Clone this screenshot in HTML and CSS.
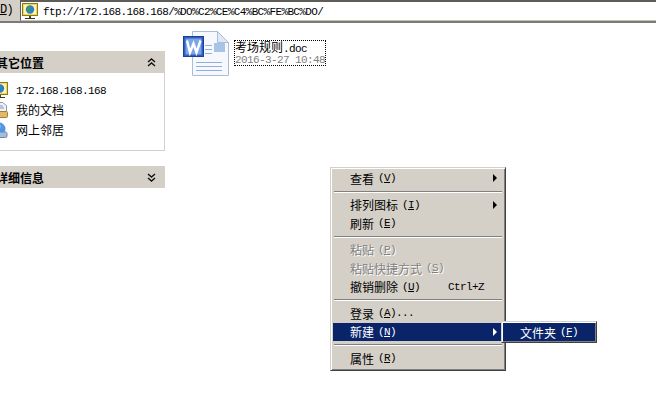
FILE: index.html
```html
<!DOCTYPE html>
<html lang="zh">
<head>
<meta charset="utf-8">
<title>FTP</title>
<link rel="stylesheet" href="styles.css">
</head>
<body>
<div class="window">
  <div class="address-bar">
    <div class="address-label"><u>D</u>)</div>
    <div class="address-input">
      <svg class="icon-16" viewBox="0 0 16 16"><rect x="0.500" y="0.500" width="15" height="12" fill="#f0d860" stroke="#8a7a1c"/><rect x="2" y="2" width="12" height="9" fill="#fff6b0"/><circle cx="8" cy="6.500" r="4.200" fill="#2f7fd0"/><path d="M5 5l3-2 1 2-2 2 1 2-2 0z" fill="#3fa33f"/><path d="M8 13v2" stroke="#4a4a18" stroke-width="2"/><path d="M3 15.500h10" stroke="#3a3a12"/></svg>
      <span class="url">ftp://172.168.168.168/%DO%C2%CE%C4%BC%FE%BC%DO/</span>
    </div>
  </div>
  <div class="content">
    <aside class="sidebar">
      <section class="panel">
        <header class="panel-head"><span class="panel-title">其它位置</span><svg class="chev" viewBox="0 0 9 9"><path d="M1 4l3.500-3L8 4M1 8l3.500-3L8 8" fill="none" stroke="#111" stroke-width="1.400"/></svg></header>
        <ul class="panel-body">
          <li class="place"><svg class="icon-16" viewBox="0 0 16 16"><rect x="0.500" y="0.500" width="15" height="12" fill="#f0d860" stroke="#8a7a1c"/><rect x="2" y="2" width="12" height="9" fill="#fff6b0"/><circle cx="8" cy="6.500" r="4.200" fill="#2f7fd0"/><path d="M5 5l3-2 1 2-2 2 1 2-2 0z" fill="#3fa33f"/><path d="M8 13v2" stroke="#4a4a18" stroke-width="2"/><path d="M3 15.500h10" stroke="#3a3a12"/></svg><span class="latin">172.168.168.168</span></li>
          <li class="place"><svg class="icon-16" viewBox="0 0 16 16"><path d="M1.500 .5h9l4 3v8h-13z" fill="#eef2fa" stroke="#8f98a8"/><path d="M3 4h8M3 6h9" stroke="#7c93bd"/><rect x="0.500" y="9.500" width="15" height="6" rx="1" fill="#e3b765" stroke="#a77f32"/></svg><span class="zh">我的文档</span></li>
          <li class="place"><svg class="icon-16" viewBox="0 0 16 16"><circle cx="7" cy="7" r="6.500" fill="#4f95e8"/><circle cx="5.500" cy="4.500" r="3" fill="#b4d8fb"/><rect x="4" y="10" width="11" height="5.500" rx="1.500" fill="#a6bcdc" stroke="#6d86ad"/></svg><span class="zh">网上邻居</span></li>
        </ul>
      </section>
      <section class="panel">
        <header class="panel-head"><span class="panel-title">详细信息</span><svg class="chev" viewBox="0 0 9 9"><path d="M1 1l3.500 3L8 1M1 5l3.500 3L8 5" fill="none" stroke="#111" stroke-width="1.400"/></svg></header>
      </section>
    </aside>
    <main class="files">
      <div class="file">
        <svg class="doc-icon" viewBox="0 0 48 48">
          <path d="M9.500 1.500h25l11 11v33h-36z" fill="#f6f8fd" stroke="#a9bcd8"/>
          <path d="M34.500 1.500v11h11z" fill="#dfe9f6" stroke="#a9bcd8"/>
          <path d="M22 15.500h7M22 19.500h7M22 23.500h7M13 32.500h26M13 36.500h26M13 40.500h26" stroke="#8fb0df"/>
          <rect x="31" y="13" width="11" height="9" fill="#a9c3e6"/>
          <rect x="0.500" y="6.500" width="20" height="20" fill="#2f5fc0" stroke="#1c3f94"/>
          <rect x="2.500" y="8.500" width="16" height="16" fill="#7aa5e8"/>
          <path d="M4 10.500l3 12 3.500-9 3 9 4-12" fill="none" stroke="#fff" stroke-width="2.400"/>
        </svg>
        <div class="file-label">
          <div class="file-name"><span class="zh">考场规则</span>.doc</div>
          <div class="file-date">2016-3-27 10:48</div>
        </div>
      </div>
    </main>
  </div>
  <nav class="menu context-menu">
    <div class="item"><span class="zh">查看</span>(<u>V</u>)<i class="arrow"></i></div>
    <hr class="sep">
    <div class="item"><span class="zh">排列图标</span>(<u>I</u>)<i class="arrow"></i></div>
    <div class="item"><span class="zh">刷新</span>(<u>E</u>)</div>
    <hr class="sep">
    <div class="item off"><span class="zh">粘贴</span>(<u>P</u>)</div>
    <div class="item off"><span class="zh">粘贴快捷方式</span>(<u>S</u>)</div>
    <div class="item"><span class="zh">撤销删除</span>(<u>U</u>)<span class="accel">Ctrl+Z</span></div>
    <hr class="sep">
    <div class="item"><span class="zh">登录</span>(<u>A</u>)...</div>
    <div class="item active"><span class="zh">新建</span>(<u>N</u>)<i class="arrow"></i></div>
    <hr class="sep">
    <div class="item"><span class="zh">属性</span>(<u>R</u>)</div>
  </nav>
  <nav class="menu submenu">
    <div class="item active"><span class="zh">文件夹</span>(<u>F</u>)</div>
  </nav>
</div>
</body>
</html>
```
FILE: styles.css
```css
* { box-sizing: border-box; }
html, body { margin: 0; padding: 0; background: #fff; }
.window {
  position: relative;
  width: 656px;
  height: 408px;
  overflow: hidden;
  font-family: "Liberation Mono", "DejaVu Sans Mono", monospace;
  font-size: 11px;
  letter-spacing: -0.6px;
  color: #000;
  background: #fff;
}
.zh {
  font-family: "Noto Sans CJK SC", sans-serif;
  font-size: 12px;
  letter-spacing: 0;
}
.icon-16 { width: 16px; height: 16px; flex: none; }

.address-bar {
  display: flex;
  height: 23px;
  background: #d4d0c8;
  border-bottom: 2px solid #7c7a74;
}
.address-label {
  width: 20px;
  padding-top: 3px;
  font-size: 12px;
  line-height: 14px;
}
.address-input {
  flex: 1;
  display: flex;
  align-items: center;
  gap: 5px;
  padding: 0 0 0 1px;
  background: #fff;
  border-top: 2px solid #5f5d58;
  border-left: 1px solid #5f5d58;
  border-bottom: 1px solid #c4c1b9;
}
.url { margin-top: 2px; letter-spacing: -0.64px; }

.content { display: flex; }
.sidebar {
  width: 165px;
  flex: none;
  display: flex;
  flex-direction: column;
  gap: 15px;
  padding-top: 28px;
}
.panel-head {
  display: flex;
  align-items: center;
  justify-content: space-between;
  height: 22px;
  padding-right: 9px;
  background: #d4d0c8;
}
.panel-title {
  margin-left: -4px;
  font-family: "Noto Sans CJK SC", sans-serif;
  font-size: 12px;
  font-weight: 700;
  letter-spacing: 0;
}
.chev { width: 9px; height: 9px; }
.panel-body {
  list-style: none;
  margin: 0;
  height: 78px;
  padding: 7px 0 0 0;
  border: 1px solid #d4d0c8;
  border-top: 0;
  border-left: 0;
}
.place {
  display: flex;
  align-items: center;
  gap: 8px;
  height: 20px;
  margin-left: -8px;
}
.place .zh { margin-top: -2px; }
.latin { margin-top: 2px; }

.files { flex: 1; padding: 7px 0 0 18px; }
.file { display: flex; align-items: flex-start; gap: 3px; }
.doc-icon { width: 48px; height: 48px; flex: none; }
.file-label {
  margin-top: 10px;
  height: 26px;
  border: 1px dotted #000;
  line-height: 12px;
  white-space: nowrap;
}
.file-name { height: 13px; line-height: 12px; }
.file-name .zh { line-height: 12px; }
.file-date { color: #808080; }

.menu {
  position: absolute;
  background: #d4d0c8;
  border: 1px solid;
  border-color: #d4d0c8 #404040 #404040 #d4d0c8;
  box-shadow: inset 1px 1px 0 #fff, inset -1px -1px 0 #808080;
}
.context-menu { left: 330px; top: 167px; width: 176px; height: 204px; padding: 1px 2px 2px; }
.submenu { left: 501px; top: 321px; width: 96px; height: 22px; padding: 1px; }
.item {
  position: relative;
  display: flex;
  align-items: center;
  height: 18.5px;
  padding-left: 17px;
  white-space: pre;
}
.submenu .item { height: 18px; }
.item .zh { margin-right: 4px; }
.active { background: #0a246a; color: #fff; }
.off { color: #808080; text-shadow: 1px 1px 0 #fff; }
.accel { position: absolute; left: 115px; }
.arrow {
  position: absolute;
  right: 6px;
  top: 5px;
  border-left: 4px solid currentColor;
  border-top: 4px solid transparent;
  border-bottom: 4px solid transparent;
}
.sep {
  height: 2px;
  margin: 3px 1px;
  border: 0;
  border-top: 1px solid #808080;
  border-bottom: 1px solid #fff;
}
```
